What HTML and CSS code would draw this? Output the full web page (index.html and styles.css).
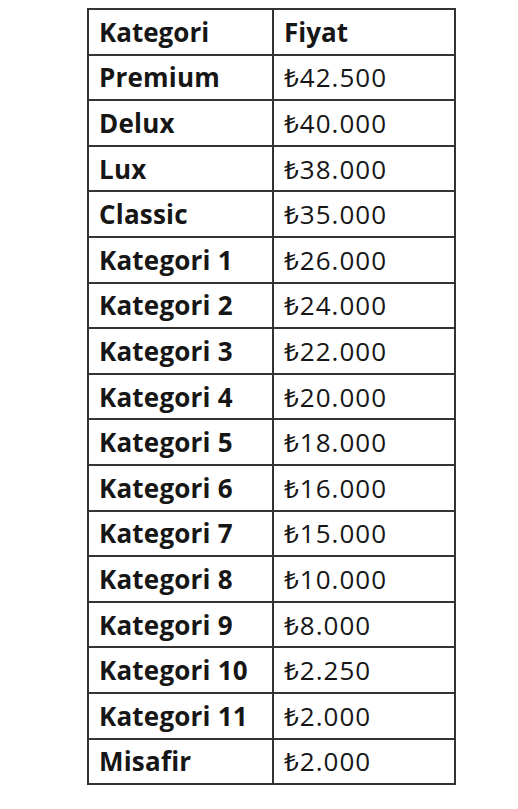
FILE: index.html
```html
<!DOCTYPE html>
<html lang="tr">
<head>
<meta charset="utf-8">
<title>Fiyat Tablosu</title>
<link rel="stylesheet" href="styles.css">
</head>
<body>
<div class="page">
<table class="prices">
<tbody>
<tr><th>Kategori</th><th>Fiyat</th></tr>
<tr><td class="cat">Premium</td><td>₺42.500</td></tr>
<tr><td class="cat">Delux</td><td>₺40.000</td></tr>
<tr><td class="cat">Lux</td><td>₺38.000</td></tr>
<tr><td class="cat">Classic</td><td>₺35.000</td></tr>
<tr><td class="cat">Kategori 1</td><td>₺26.000</td></tr>
<tr><td class="cat">Kategori 2</td><td>₺24.000</td></tr>
<tr><td class="cat">Kategori 3</td><td>₺22.000</td></tr>
<tr><td class="cat">Kategori 4</td><td>₺20.000</td></tr>
<tr><td class="cat">Kategori 5</td><td>₺18.000</td></tr>
<tr><td class="cat">Kategori 6</td><td>₺16.000</td></tr>
<tr><td class="cat">Kategori 7</td><td>₺15.000</td></tr>
<tr><td class="cat">Kategori 8</td><td>₺10.000</td></tr>
<tr><td class="cat">Kategori 9</td><td>₺8.000</td></tr>
<tr><td class="cat">Kategori 10</td><td>₺2.250</td></tr>
<tr><td class="cat">Kategori 11</td><td>₺2.000</td></tr>
<tr><td class="cat">Misafir</td><td>₺2.000</td></tr>
</tbody>
</table>
</div>
</body>
</html>
```
FILE: styles.css
```css
html, body {
  margin: 0;
  padding: 0;
  background: #ffffff;
}
.page {
  width: 518px;
  height: 809px;
  padding-top: 8px;
  padding-left: 87px;
  box-sizing: border-box;
  font-family: "Open Sans", "Noto Sans", "DejaVu Sans", sans-serif;
  color: #161616;
}
.prices {
  border-collapse: collapse;
  width: 369px;
  table-layout: fixed;
}
.prices th,
.prices td {
  border: 2px solid #333333;
  height: 45.6px;
  padding: 0 0 0 10px;
  text-align: left;
  vertical-align: middle;
  font-size: 26px;
  line-height: 1;
  box-sizing: border-box;
}
.prices tr > :first-child {
  width: 185px;
}
.prices th,
.prices td.cat {
  font-weight: 700;
}
.prices td {
  font-weight: 400;
  letter-spacing: 1px;
}
.prices td.cat {
  letter-spacing: 0.2px;
}
```
